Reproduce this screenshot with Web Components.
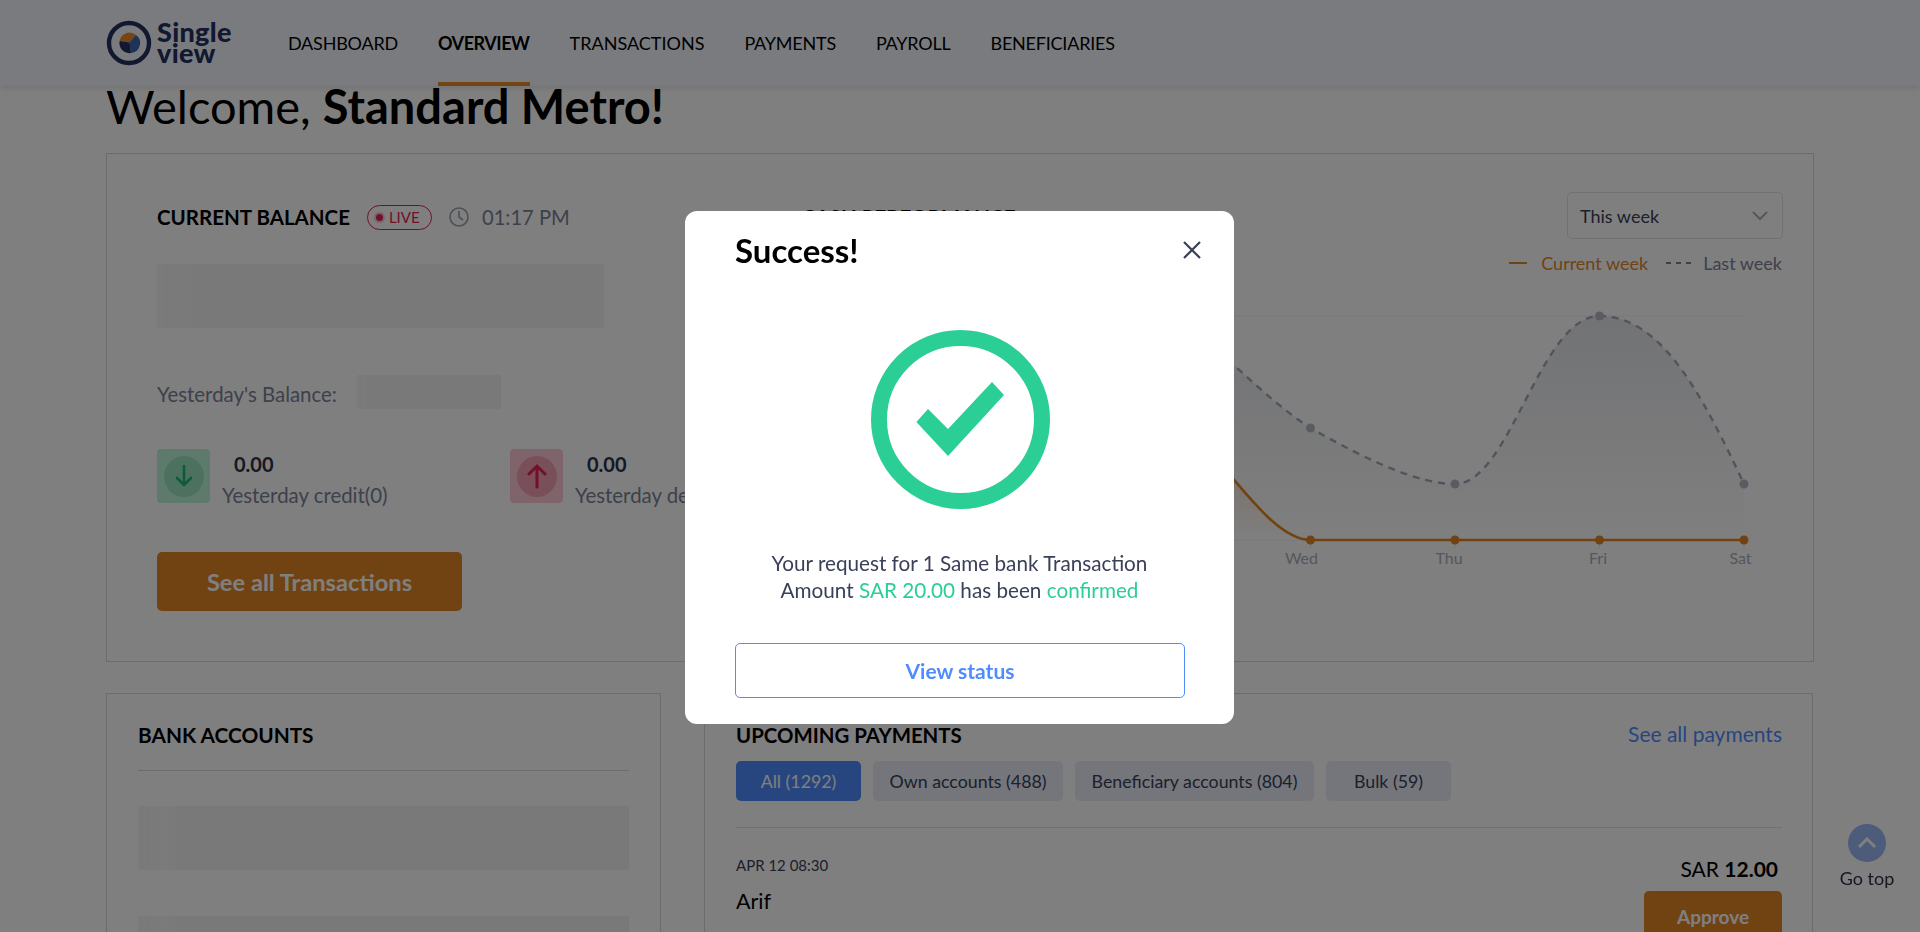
<!DOCTYPE html>
<html>
<head>
<meta charset="utf-8">
<title>Single view</title>
<style>
  html, body { margin: 0; height: 932px; overflow: hidden; background: #fff; }
  body { font-family: Lato, "Liberation Sans", sans-serif; color: #000; }
</style>
</head>
<body>
<sv-header></sv-header>
<sv-page>
  <sv-balance></sv-balance>
  <sv-accounts slot="left"></sv-accounts>
  <sv-payments slot="right"></sv-payments>
</sv-page>
<sv-gotop></sv-gotop>
<sv-modal></sv-modal>

<script>
class SvSkeleton extends HTMLElement {
  constructor() {
    super();
    this.attachShadow({ mode: "open" });
    this.shadowRoot.innerHTML = `
      <style>
        :host { display: block; height: 64px; background: linear-gradient(90deg, #f6f6f6 0, #f3f3f3 2%, #f6f6f6 5%, #f2f2f2 9%, #f2f2f2 100%); }
      </style>`;
  }
}

class SvHeader extends HTMLElement {
  constructor() {
    super();
    this.attachShadow({ mode: "open" });
    const items = ["DASHBOARD", "OVERVIEW", "TRANSACTIONS", "PAYMENTS", "PAYROLL", "BENEFICIARIES"];
    this.shadowRoot.innerHTML = `
      <style>
        :host { display: flex; position: relative; z-index: 2; height: 86px; padding-left: 106px; align-items: stretch; background: #f4f7fe; box-shadow: 0 2px 6px rgba(0,0,0,.12); }
        .logo { display: flex; align-items: center; gap: 5px; width: 182px; flex: none; }
        .logo svg { display: block; }
        .word { font-weight: 900; font-size: 27px; line-height: 21px; color: #25305f; letter-spacing: .3px; margin-top: -2px; }
        nav { display: flex; gap: 40px; }
        a { display: flex; align-items: center; font-size: 18px; color: #000; box-sizing: border-box; letter-spacing: -.22px; }
        a.on { font-weight: 700; letter-spacing: -.45px; box-shadow: inset 0 -4px 0 #e88c28; }
        a:nth-child(3) { letter-spacing: 0; }
      </style>
      <div class="logo">
        <svg width="46" height="46" viewBox="0 0 46 46">
          <circle cx="23" cy="23" r="20" fill="none" stroke="#25305f" stroke-width="4.4"></circle>
          <path d="M23.5 22.5 L13.6 21 A10 10 0 0 1 30 15 Z" fill="#e88c28"></path>
          <path d="M23.5 22.5 L30 15 A10 10 0 0 1 25 33 Z" fill="#3a66b0"></path>
          <path d="M23.5 22.5 L25 33 A10 10 0 0 1 13.6 21 Z" fill="#25305f"></path>
        </svg>
        <div class="word">Single<br>view</div>
      </div>
      <nav>${items.map((t) => `<a class="${t === "OVERVIEW" ? "on" : ""}">${t}</a>`).join("")}</nav>`;
  }
}

class SvPage extends HTMLElement {
  constructor() {
    super();
    this.attachShadow({ mode: "open" });
    this.shadowRoot.innerHTML = `
      <style>
        :host { display: block; padding: 0 106px; }
        h1 { margin: 0 0 27px; font-size: 47px; line-height: 40px; font-weight: 400; height: 40px; white-space: nowrap; }
        b { font-weight: 700; }
        .cols { display: grid; grid-template-columns: 555px 1109px; gap: 43px; margin-top: 31px; }
      </style>
      <h1>Welcome, <b>Standard Metro!</b></h1>
      <slot></slot>
      <div class="cols">
        <slot name="left"></slot>
        <slot name="right"></slot>
      </div>`;
  }
}

class SvBalance extends HTMLElement {
  constructor() {
    super();
    this.attachShadow({ mode: "open" });
    this.shadowRoot.innerHTML = `
      <style>
        :host { display: flex; height: 509px; box-sizing: border-box; border: 1px solid #d8d8d8; padding: 38px 30px 0 50px; }
        .left { flex: 0 0 645px; min-width: 0; padding-top: 12px; }
        .right { flex: 1; min-width: 0; }
        .title { display: flex; align-items: center; height: 26px; font-size: 20.5px; font-weight: 700; white-space: nowrap; }
        .live { display: flex; align-items: center; box-sizing: border-box; height: 25px; width: 65px; margin-left: 17px; border: 1px solid #e0234e; border-radius: 13px; padding-left: 8px; gap: 6px; color: #e0234e; font-size: 15px; font-weight: 400; }
        .live i { width: 7px; height: 7px; border-radius: 50%; background: #e0234e; box-shadow: 0 0 0 2px #f5c9d4; }
        .clock { margin-left: 17px; }
        .time { margin-left: 13px; font-size: 20.2px; font-weight: 400; color: #7a8296; }
        sv-skeleton.big { width: 447px; margin-top: 34px; }
        .yest { display: flex; align-items: center; margin-top: 47px; height: 34px; font-size: 20.4px; color: #7a8296; }
        .yest span { position: relative; top: 2px; }
        .yest sv-skeleton { width: 144px; height: 34px; margin-left: 20px; }
        .stats { display: flex; margin-top: 40px; }
        .stat { display: flex; flex: 0 0 353px; gap: 12px; white-space: nowrap; }
        .box { flex: none; display: flex; align-items: center; justify-content: center; width: 53px; height: 54px; border-radius: 4px; background: #bdf5da; }
        .box span { display: flex; align-items: center; justify-content: center; width: 40px; height: 41px; border-radius: 50%; background: #98e4bf; }
        .box.red { background: #ffc9d6; }
        .box.red span { background: #f2a0b5; }
        .num { font-size: 20px; font-weight: 700; color: #2c3146; padding-left: 12px; line-height: 24px; margin-top: 3px; }
        .lbl { font-size: 20.4px; color: #7a8296; line-height: 24px; margin-top: 7px; }
        .btn { display: flex; align-items: center; justify-content: center; box-sizing: border-box; width: 305px; height: 59px; margin-top: 45px; border-radius: 5px; background: #e38626; color: #fff; font-size: 23.7px; font-weight: 700; }
        .rhead { display: flex; justify-content: space-between; align-items: flex-start; }
        .rhead .title { margin-top: 12px; }
        select-box { display: flex; align-items: center; justify-content: space-between; box-sizing: border-box; width: 216px; height: 47px; padding: 0 14px 0 12px; border: 1px solid #dfe3ee; border-radius: 5px; font-size: 18px; color: #3a4058; }
        .legend { display: flex; justify-content: flex-end; align-items: center; height: 24px; margin-top: 12px; padding-right: 1px; font-size: 18px; color: #7a8296; }
        .legend .cur { color: #e38626; margin: 0 18px 0 14px; }
        .legend .dash { margin-right: 11px; }
        svg.chart { display: block; margin-top: 15px; }
        svg text { font-family: Lato, "Liberation Sans", sans-serif; font-size: 16px; fill: #a9aebb; text-anchor: middle; }
      </style>
      <div class="left">
        <div class="title">CURRENT BALANCE
          <span class="live"><i></i>LIVE</span>
          <svg class="clock" width="20" height="20" viewBox="0 0 20 20" fill="none" stroke="#9aa1b2" stroke-width="1.6"><circle cx="10" cy="10" r="9"></circle><path d="M10 4 V10 L14 13"></path></svg>
          <span class="time">01:17 PM</span>
        </div>
        <sv-skeleton class="big"></sv-skeleton>
        <div class="yest"><span>Yesterday's Balance:</span><sv-skeleton></sv-skeleton></div>
        <div class="stats">
          <div class="stat">
            <div class="box"><span>
              <svg width="18" height="24" viewBox="0 0 18 24" fill="none" stroke="#1fb37f" stroke-width="2.6" stroke-linecap="round"><path d="M9 2 V21 M2 14 L9 21 L16 14"></path></svg>
            </span></div>
            <div><div class="num">0.00</div><div class="lbl">Yesterday credit(0)</div></div>
          </div>
          <div class="stat">
            <div class="box red"><span>
              <svg width="20" height="26" viewBox="0 0 20 26" fill="none" stroke="#e0234e" stroke-width="3" stroke-linecap="round"><path d="M10 24 V3 M2 11 L10 3 L18 11"></path></svg>
            </span></div>
            <div><div class="num">0.00</div><div class="lbl">Yesterday debit(0)</div></div>
          </div>
        </div>
        <div class="btn">See all Transactions</div>
      </div>
      <div class="right">
        <div class="rhead">
          <div class="title">CASH PERFORMANCE</div>
          <select-box>This week
            <svg width="16" height="10" viewBox="0 0 16 10" fill="none" stroke="#a9aebb" stroke-width="2"><path d="M1 1 L8 8 L15 1"></path></svg>
          </select-box>
        </div>
        <div class="legend">
          <svg width="18" height="2"><rect width="18" height="2" fill="#e38626"></rect></svg>
          <span class="cur">Current week</span>
          <svg class="dash" width="26" height="2"><path d="M0 1 H26" stroke="#7a8296" stroke-width="2" stroke-dasharray="5 5"></path></svg>
          Last week
        </div>
        <svg class="chart" width="981" height="280" viewBox="802 290 981 280">
          <defs>
            <linearGradient id="gr" x1="0" y1="0" x2="0" y2="1"><stop offset="0" stop-color="#8d93a3" stop-opacity=".26"></stop><stop offset="1" stop-color="#8d93a3" stop-opacity="0"></stop></linearGradient>
            <linearGradient id="or" x1="0" y1="0" x2="0" y2="1"><stop offset="0" stop-color="#e38626" stop-opacity=".3"></stop><stop offset="1" stop-color="#e38626" stop-opacity="0"></stop></linearGradient>
          </defs>
          <path d="M1160 316 H1744 M1160 540 H1744" stroke="#eef0f5" stroke-width="1"></path>
          <path d="M1150 290 C1220,348 1260,395 1310.5,428 C1370,462 1420,484 1455,484 C1510,484 1540,316 1599.5,316 C1660,316 1700,390 1744,484 V540 H1150 Z" fill="url(#gr)"></path>
          <path d="M1180 420 C1225,460 1270,540 1310.5,540 H1180 Z" fill="url(#or)"></path>
          <path d="M1150 290 C1220,348 1260,395 1310.5,428 C1370,462 1420,484 1455,484 C1510,484 1540,316 1599.5,316 C1660,316 1700,390 1744,484" fill="none" stroke="#a3a9b8" stroke-width="2.4" stroke-dasharray="7 6"></path>
          <path d="M1180 420 C1225,460 1270,540 1310.5,540 H1744" fill="none" stroke="#e38626" stroke-width="2.6"></path>
          <path d="M1310.5 540 v8 M1455 540 v8 M1599.5 540 v8 M1744 540 v8" stroke="#e6e8ee"></path>
          <g fill="#b4b9c6">
            <circle cx="1310.5" cy="428" r="4.5"></circle><circle cx="1455" cy="484" r="4.5"></circle><circle cx="1599.5" cy="316" r="4.5"></circle><circle cx="1744" cy="484" r="4.5"></circle>
          </g>
          <g fill="#e38626">
            <circle cx="1310.5" cy="540" r="4.5"></circle><circle cx="1455" cy="540" r="4.5"></circle><circle cx="1599.5" cy="540" r="4.5"></circle><circle cx="1744" cy="540" r="4.5"></circle>
          </g>
          <text x="1301.5" y="564">Wed</text><text x="1449" y="564">Thu</text><text x="1598" y="564">Fri</text><text x="1740.5" y="564">Sat</text>
        </svg>
      </div>`;
  }
}

class SvAccounts extends HTMLElement {
  constructor() {
    super();
    this.attachShadow({ mode: "open" });
    this.shadowRoot.innerHTML = `
      <style>
        :host { display: block; box-sizing: border-box; height: 300px; border: 1px solid #d8d8d8; padding: 29px 31px 0 31px; }
        h2 { margin: 0; height: 47px; border-bottom: 1px solid #d8d8d8; font-size: 20.8px; line-height: 24px; font-weight: 700; }
        sv-skeleton { margin-top: 35px; }
        sv-skeleton + sv-skeleton { margin-top: 46px; }
      </style>
      <h2>BANK ACCOUNTS</h2>
      <sv-skeleton></sv-skeleton>
      <sv-skeleton></sv-skeleton>`;
  }
}

class SvPayments extends HTMLElement {
  constructor() {
    super();
    this.attachShadow({ mode: "open" });
    this.shadowRoot.innerHTML = `
      <style>
        :host { display: block; box-sizing: border-box; height: 300px; border: 1px solid #d8d8d8; padding: 29px 30px 0 31px; }
        .head { display: flex; justify-content: space-between; height: 24px; align-items: center; }
        h2 { margin: 0; font-size: 20.4px; font-weight: 700; }
        .all { font-size: 21px; color: #4f8cff; position: relative; top: -2px; }
        .chips { display: flex; gap: 12px; margin-top: 14px; padding-bottom: 26px; border-bottom: 1px solid #dfe3ee; }
        .chip { display: flex; align-items: center; justify-content: center; height: 40px; border-radius: 5px; background: #e8ecf6; font-size: 17.8px; color: #3a4058; white-space: nowrap; box-sizing: border-box; }
        .chip.on { background: #4f8cff; color: #fff; }
        .row { display: flex; justify-content: space-between; }
        .date { font-size: 15px; margin-top: 28px; color: #3a4058; }
        .name { font-size: 21.5px; margin-top: 14px; }
        .right { display: flex; flex-direction: column; align-items: flex-end; }
        .amt { font-size: 21px; margin: 28px 4px 0 0; }
        .amt b { font-weight: 700; }
        .appr { display: flex; align-items: center; justify-content: center; width: 138px; height: 50px; margin-top: 10px; border-radius: 5px; background: #e38626; color: #fff; font-size: 19px; font-weight: 700; }
      </style>
      <div class="head"><h2>UPCOMING PAYMENTS</h2><span class="all">See all payments</span></div>
      <div class="chips">
        <span class="chip on" style="width:125px">All (1292)</span>
        <span class="chip" style="width:190px">Own accounts (488)</span>
        <span class="chip" style="width:239px">Beneficiary accounts (804)</span>
        <span class="chip" style="width:125px">Bulk (59)</span>
      </div>
      <div class="row">
        <div><div class="date">APR 12 08:30</div><div class="name">Arif</div></div>
        <div class="right"><div class="amt">SAR <b>12.00</b></div><div class="appr">Approve</div></div>
      </div>`;
  }
}

class SvGotop extends HTMLElement {
  constructor() {
    super();
    this.attachShadow({ mode: "open" });
    this.shadowRoot.innerHTML = `
      <style>
        :host { position: fixed; left: 1827px; top: 824px; width: 80px; display: flex; flex-direction: column; align-items: center; gap: 5px; font-size: 18px; line-height: 22px; color: #2c3146; }
        span { display: flex; align-items: center; justify-content: center; width: 38px; height: 38px; border-radius: 50%; background: #9ab8f5; }
      </style>
      <span><svg width="20" height="12" viewBox="0 0 20 12" fill="none" stroke="#fff" stroke-width="3"><path d="M2 10 L10 2 L18 10"></path></svg></span>
      Go top`;
  }
}

class SvModal extends HTMLElement {
  constructor() {
    super();
    this.attachShadow({ mode: "open" });
    this.shadowRoot.innerHTML = `
      <style>
        :host { position: fixed; inset: 0; z-index: 10; background: rgba(0,0,0,.5); }
        .dialog { position: absolute; left: 685px; top: 211px; width: 549px; height: 513px; box-sizing: border-box; padding: 0 50px; background: #fff; border-radius: 12px; }
        .top { display: flex; justify-content: space-between; align-items: center; height: 78px; padding-bottom: 2px; }
        h3 { margin: 0; font-size: 33px; font-weight: 700; color: #000; }
        .close { display: block; margin-right: -18px; }
        .check { display: block; margin: 39px 0 0 136px; }
        p { margin: 41px 0 0; text-align: center; font-size: 20.7px; line-height: 27px; color: #3a4058; white-space: nowrap; }
        p em { font-style: normal; color: #2bcf96; }
        .view { display: flex; align-items: center; justify-content: center; box-sizing: border-box; height: 55px; width: 450px; margin-top: 39px; border: 1px solid #4f8cff; border-radius: 5px; color: #4f8cff; font-size: 21px; font-weight: 700; }
      </style>
      <div class="dialog">
        <div class="top">
          <h3>Success!</h3>
          <svg class="close" width="20" height="20" viewBox="0 0 20 20" fill="none" stroke="#3a4058" stroke-width="2.2"><path d="M2 2 L18 18 M18 2 L2 18"></path></svg>
        </div>
        <svg class="check" width="179" height="179" viewBox="871 330 179 179">
          <circle cx="960.5" cy="419.5" r="81.5" fill="none" stroke="#2bcf96" stroke-width="16"></circle>
          <path d="M916.4 422 L928 409 L948 429 L992 382 L1004 395 L948 456 Z" fill="#2bcf96"></path>
        </svg>
        <p>Your request for 1 Same bank Transaction<br>Amount <em>SAR 20.00</em> has been <em>confirmed</em></p>
        <div class="view">View status</div>
      </div>`;
  }
}

customElements.define("sv-skeleton", SvSkeleton);
customElements.define("sv-header", SvHeader);
customElements.define("sv-page", SvPage);
customElements.define("sv-balance", SvBalance);
customElements.define("sv-accounts", SvAccounts);
customElements.define("sv-payments", SvPayments);
customElements.define("sv-gotop", SvGotop);
customElements.define("sv-modal", SvModal);
</script>
</body>
</html>
